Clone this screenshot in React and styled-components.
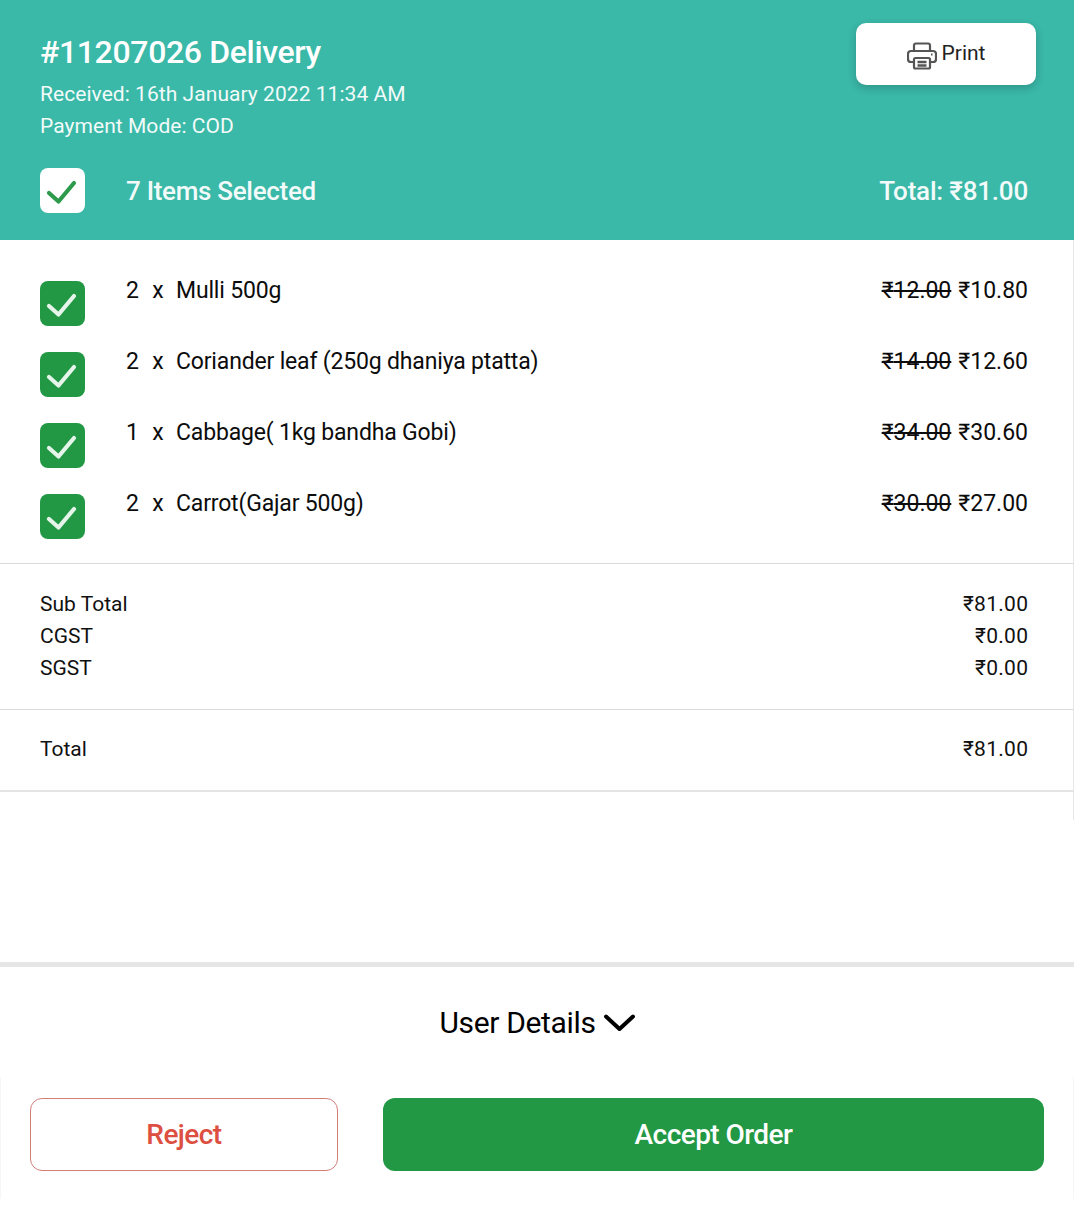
import React from 'react'
import styled, { createGlobalStyle } from 'styled-components'

const GlobalStyle = createGlobalStyle`
  html, body { margin: 0; padding: 0; background: #fff; }
  body { font-family: Roboto, "Liberation Sans", sans-serif; color: #111; }
  * { box-sizing: border-box; }
`

const Page = styled.div`
  width: 1074px;
  height: 1220px;
  display: flex;
  flex-direction: column;
  overflow: hidden;
`

const Header = styled.header`
  height: 240px;
  background: #3ab8a8;
  color: #fff;
  padding: 23px 46px 0 40px;
  display: flex;
  flex-direction: column;
`

const HeaderTop = styled.div`
  display: flex;
  justify-content: space-between;
  align-items: flex-start;
  margin-right: -8px;
`

const OrderTitle = styled.h1`
  margin: 7px 0 4px;
  font-size: 32px;
  line-height: 44px;
  font-weight: 500;
  letter-spacing: -0.35px;
`

const Meta = styled.div`
  font-size: 21px;
  line-height: 32px;
  letter-spacing: 0.05px;
  color: #f2fbf9;
`

const PrintButton = styled.button`
  width: 180px;
  height: 62px;
  padding: 0 0 2px;
  border: none;
  border-radius: 10px;
  background: #fff;
  box-shadow: 0 3px 8px rgba(0, 0, 0, 0.2);
  display: flex;
  align-items: center;
  justify-content: center;
  gap: 5px;
  font: 400 21px Roboto, sans-serif;
  color: #222;
  svg { margin-top: 6px; }
`

const SelectedRow = styled.div`
  margin-top: 26px;
  display: flex;
  align-items: center;
  justify-content: space-between;
  font-size: 26px;
  font-weight: 500;
  letter-spacing: -0.3px;
  color: #f2fbf9;
`

const SelectedLabel = styled.div`
  display: flex;
  align-items: center;
  gap: 41px;
`

const TotalLabel = styled.div`
  font-weight: 500;
  letter-spacing: -0.2px;
`

const Box = styled.span`
  width: 45px;
  height: 45px;
  flex: none;
  border-radius: 8px;
  display: flex;
  background: ${p => (p.$light ? '#fff' : '#229845')};
`

const Content = styled.main`
  height: 580px;
  border-right: 1px solid #e6e6e6;
  display: flex;
  flex-direction: column;
`

const Items = styled.section`
  padding: 41px 45px 24px 40px;
  display: flex;
  flex-direction: column;
  gap: 26px;
  border-bottom: 1px solid #d9d9d9;
`

const ItemRow = styled.div`
  display: flex;
  align-items: flex-start;
  gap: 41px;
  font-size: 23px;
  line-height: 40px;
  height: 45px;
  letter-spacing: -0.17px;
  color: #0c0c0c;
`

const ItemName = styled.div`
  flex: 1;
  margin-top: -10px;
  display: flex;
`

const Qty = styled.span`
  width: 50px;
  flex: none;
  letter-spacing: 0;
  word-spacing: 7.5px;
`

const Price = styled.div`
  margin-top: -10px;
  letter-spacing: 0;
  s { margin-right: 7px; }
`

const Summary = styled.section`
  padding: 24px 45px 25px 40px;
  border-bottom: 1px solid #d9d9d9;
  font-size: 21px;
  line-height: 32px;
`

const TotalSection = styled(Summary)`
  padding-top: 23px;
  padding-bottom: 25px;
  border-bottom: 2px solid #e4e4e4;
`

const Line = styled.div`
  display: flex;
  justify-content: space-between;
`

const Amount = styled.span`
  letter-spacing: 0.3px;
  margin-right: -0.3px;
`

const Footer = styled.footer`
  margin-top: 142px;
  border-top: 5px solid #e6e6e6;
  height: 258px;
  display: flex;
  flex-direction: column;
`

const Toggle = styled.div`
  height: 110px;
  padding-top: 31px;
  display: flex;
  justify-content: center;
  align-items: flex-start;
  gap: 8px;
  font-size: 30px;
  line-height: 50px;
  letter-spacing: -0.35px;
  color: #000;
  svg { margin-top: 16px; }
`

const Actions = styled.div`
  height: 122px;
  padding: 21px 29px 0;
  display: flex;
  gap: 45px;
  border-left: 1px solid #f6f6f6;
  border-right: 1px solid #f6f6f6;
`

const ActionButton = styled.button`
  height: 73px;
  border-radius: 12px;
  font: 500 28px Roboto, sans-serif;
  letter-spacing: -0.55px;
  ${p =>
    p.$primary
      ? 'flex: 1; background: #229845; color: #fff; border: none;'
      : 'width: 308px; background: #fff; color: #dc4f41; border: 1.5px solid #d27f78;'}
`

const Check = ({ color }) => (
  <svg width="45" height="45" viewBox="0 0 45 45" fill="none">
    <path d="M9 25 L18.5 33.5 L34 15" stroke={color} strokeWidth="4.2" strokeLinecap="round" strokeLinejoin="round" />
  </svg>
)

const Chevron = () => (
  <svg width="31" height="18" viewBox="0 0 31 18" fill="none">
    <path d="M2 2.5 L15.5 15 L29 2.5" stroke="#000" strokeWidth="4" strokeLinecap="round" strokeLinejoin="round" />
  </svg>
)

const PrinterIcon = () => (
  <svg width="30" height="28" viewBox="0 0 30 28" fill="none" stroke="#555" strokeWidth="2.2" strokeLinejoin="round">
    <path d="M7 9V3.5A2 2 0 0 1 9 1.5h12a2 2 0 0 1 2 2V9" />
    <path d="M7 20H4a3 3 0 0 1-3-3v-5a3 3 0 0 1 3-3h22a3 3 0 0 1 3 3v5a3 3 0 0 1-3 3h-3" />
    <rect x="7" y="16" width="16" height="10.5" rx="1.5" />
    <path d="M10.5 20h9M10.5 23.5h9" strokeWidth="2.6" />
    <path d="M24 12.5h1.5" strokeWidth="2.2" />
  </svg>
)

const items = [
  { qty: 2, name: 'Mulli 500g', was: '12.00', now: '10.80' },
  { qty: 2, name: 'Coriander leaf (250g dhaniya ptatta)', was: '14.00', now: '12.60' },
  { qty: 1, name: 'Cabbage( 1kg bandha Gobi)', was: '34.00', now: '30.60' },
  { qty: 2, name: 'Carrot(Gajar 500g)', was: '30.00', now: '27.00' },
]

const App = () => {
  return (
    <Page>
      <GlobalStyle />
      <Header>
        <HeaderTop>
          <div>
            <OrderTitle>#11207026 Delivery</OrderTitle>
            <Meta>Received: 16th January 2022 11:34 AM</Meta>
            <Meta>Payment Mode: COD</Meta>
          </div>
          <PrintButton><PrinterIcon />Print</PrintButton>
        </HeaderTop>
        <SelectedRow>
          <SelectedLabel>
            <Box $light><Check color="#2e9a4c" /></Box>
            7 Items Selected
          </SelectedLabel>
          <TotalLabel>Total: ₹81.00</TotalLabel>
        </SelectedRow>
      </Header>
      <Content>
        <Items>
          {items.map(item => (
            <ItemRow key={item.name}>
              <Box><Check color="#e6f5ea" /></Box>
              <ItemName><Qty>{item.qty} x</Qty>{item.name}</ItemName>
              <Price><s>₹{item.was}</s>₹{item.now}</Price>
            </ItemRow>
          ))}
        </Items>
        <Summary>
          <Line><span>Sub Total</span><Amount>₹81.00</Amount></Line>
          <Line><span>CGST</span><Amount>₹0.00</Amount></Line>
          <Line><span>SGST</span><Amount>₹0.00</Amount></Line>
        </Summary>
        <TotalSection>
          <Line><span>Total</span><Amount>₹81.00</Amount></Line>
        </TotalSection>
      </Content>
      <Footer>
        <Toggle>User Details <Chevron /></Toggle>
        <Actions>
          <ActionButton>Reject</ActionButton>
          <ActionButton $primary>Accept Order</ActionButton>
        </Actions>
      </Footer>
    </Page>
  )
}

export default App
